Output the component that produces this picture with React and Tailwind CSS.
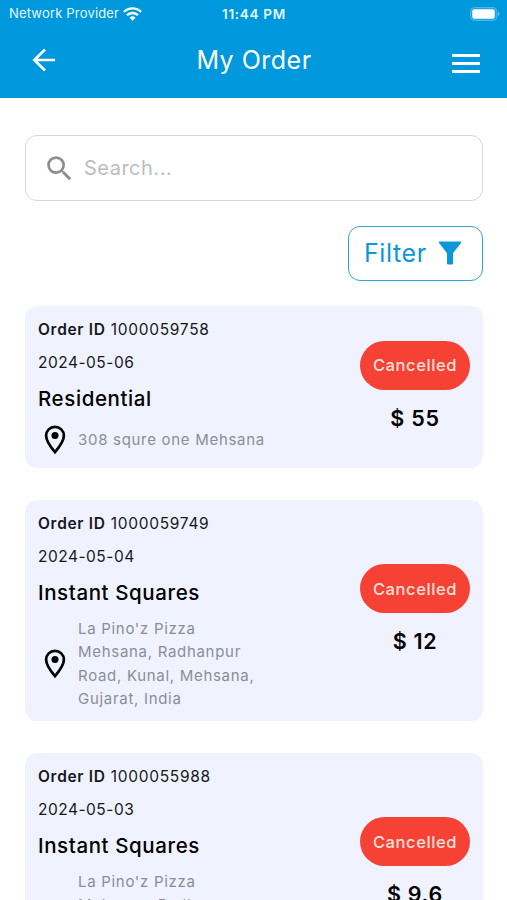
import React, { useState } from "react";
import { MdSearch } from "react-icons/md";

const orders = [
  {
    id: "1000059758",
    date: "2024-05-06",
    title: "Residential",
    address: ["308 squre one Mehsana"],
    status: "Cancelled",
    price: "55",
  },
  {
    id: "1000059749",
    date: "2024-05-04",
    title: "Instant Squares",
    address: ["La Pino'z Pizza", "Mehsana, Radhanpur", "Road, Kunal, Mehsana,", "Gujarat, India"],
    status: "Cancelled",
    price: "12",
  },
  {
    id: "1000055988",
    date: "2024-05-03",
    title: "Instant Squares",
    address: ["La Pino'z Pizza", "Mehsana, Radhanpur", "Road, Kunal, Mehsana,", "Gujarat, India"],
    status: "Cancelled",
    price: "9.6",
  },
];

const StatusBar = () => (
  <div className="grid h-7 grid-cols-3 items-center pl-[9px] pr-[7px] text-[13px] text-[#e4f7ff]">
    <div className="flex items-center gap-1 whitespace-nowrap">
      <span className="tracking-[0.18px]">Network Provider</span>
      <svg width="19" height="14" viewBox="0 0 19 14" fill="none" stroke="white" strokeWidth="2.3">
        <path d="M.9 4.900a12.400 12.400 0 0 1 17.200 0" />
        <path d="M4 8.200a8 8 0 0 1 11 0" />
        <path d="M9.500 13.800 6.500 10.700a4.300 4.300 0 0 1 6 0z" fill="white" stroke="none" />
      </svg>
    </div>
    <div className="whitespace-nowrap pr-px text-center text-[13.500px] font-semibold tracking-[0.7px]">
      11:44 PM
    </div>
    <div className="flex justify-end">
      <svg width="30" height="14" viewBox="0 0 30 14">
        <rect x="0.5" y="0.5" width="26.5" height="13" rx="4" fill="#1ba3e2" stroke="#4cb8e9" />
        <rect x="2.3" y="2.3" width="22.4" height="9.4" rx="2" fill="white" />
        <path d="M28.3 5v4c1.3-.6 1.3-3.400 0-4z" fill="#8fd2f2" />
      </svg>
    </div>
  </div>
);

const Header = () => (
  <header className="h-[98px] bg-[#0098dd]">
    <StatusBar />
    <div className="flex h-[66px] items-center justify-between pl-8 pr-[27px] text-white">
      <button aria-label="Back" className="pb-[2px]">
        <svg width="24" height="24" viewBox="0 0 24 24" fill="none" stroke="white" strokeWidth="2.6">
          <path d="M13 1.500 2.300 12 13 22.500M2 12h21" />
        </svg>
      </button>
      <h1 className="text-[25px] tracking-[0.5px]">My Order</h1>
      <button aria-label="Menu" className="flex flex-col gap-[5px] pt-[4px]">
        <span className="h-[3px] w-7 bg-white" />
        <span className="h-[3px] w-7 bg-white" />
        <span className="h-[3px] w-7 bg-white" />
      </button>
    </div>
  </header>
);

const PinIcon = () => (
  <svg width="34" height="34" viewBox="0 0 34 34" fill="none" className="shrink-0">
    <path
      d="M17 3.800c-4.900 0-8.900 3.900-8.900 8.800 0 6.200 8.900 16.600 8.900 16.600s8.900-10.400 8.900-16.600c0-4.900-4-8.800-8.900-8.800z"
      stroke="black"
      strokeWidth="2.7"
    />
    <circle cx="17" cy="12.500" r="3.500" fill="black" />
  </svg>
);

const OrderCard = ({ order }) => (
  <div className="flex items-center justify-between rounded-xl bg-[#f0f3ff] pb-[11px] pl-[13px] pr-[12.5px] pt-[11px]">
    <div className="text-[#15171c]">
      <p className="text-[15.500px] leading-[26px] tracking-[0.7px]">
        <span className="font-semibold">Order ID</span> {order.id}
      </p>
      <p className="mt-[7px] text-[15.500px] leading-[26px] tracking-[0.5px]">{order.date}</p>
      <h2 className="mt-[7px] text-[20.500px] font-medium leading-8 tracking-[0.6px] text-black">
        {order.title}
      </h2>
      <div className="mt-[8px] flex items-center gap-[6px]">
        <PinIcon />
        <div className="text-[15px] leading-[23.25px] tracking-[0.7px] text-[#8b8d96]">
          {order.address.map((line) => (
            <p key={line}>{line}</p>
          ))}
        </div>
      </div>
    </div>
    <div className="flex flex-col items-center gap-[13px]">
      <span className="flex h-[49px] w-[110px] items-center justify-center rounded-full bg-[#f64234] pt-px text-[16.500px] font-medium tracking-[0.6px] text-[#ffe0d9]">
        {order.status}
      </span>
      <span className="text-[21.500px] font-semibold leading-[31px] tracking-[0.7px] text-black">
        $ {order.price}
      </span>
    </div>
  </div>
);

export default function App() {
  const [search, setSearch] = useState("");

  return (
    <div className="h-[900px] overflow-hidden bg-white font-['Inter',sans-serif]">
      <Header />
      <main className="pl-[25px] pr-[24.5px] pt-[37px]">
        <div className="flex h-[66px] items-center gap-2 rounded-xl border-[1.500px] border-[#d6d6d6] pl-[17px]">
          <MdSearch className="size-[33px] text-[#8e8e8e]" />
          <input
            value={search}
            onChange={(e) => setSearch(e.target.value)}
            placeholder="Search..."
            className="min-w-0 flex-1 text-[20px] tracking-[0.5px] outline-none placeholder:text-[#bdbdbd]"
          />
        </div>
        <div className="mt-[24.5px] flex justify-end">
          <button className="flex h-[55px] w-[134.5px] items-center gap-[11px] rounded-xl border border-[#2ea6dd] pl-[15px] text-[#0b97d9]">
            <span className="pt-[2px] text-[25px] tracking-[0.6px]">Filter</span>
            <svg width="24" height="24" viewBox="0 0 24 24" fill="currentColor">
              <path d="M1.800.500h20.400q1.500.2.700 1.500L15 12.200V22.300q0 1.200-1.200 1.200h-3.600q-1.200 0-1.200-1.200V12.200L1.100 2Q.3.700 1.800.500z" />
            </svg>
          </button>
        </div>
        <div className="mt-[25.5px] flex flex-col gap-8">
          {orders.map((order) => (
            <OrderCard key={order.id} order={order} />
          ))}
        </div>
      </main>
    </div>
  );
}
